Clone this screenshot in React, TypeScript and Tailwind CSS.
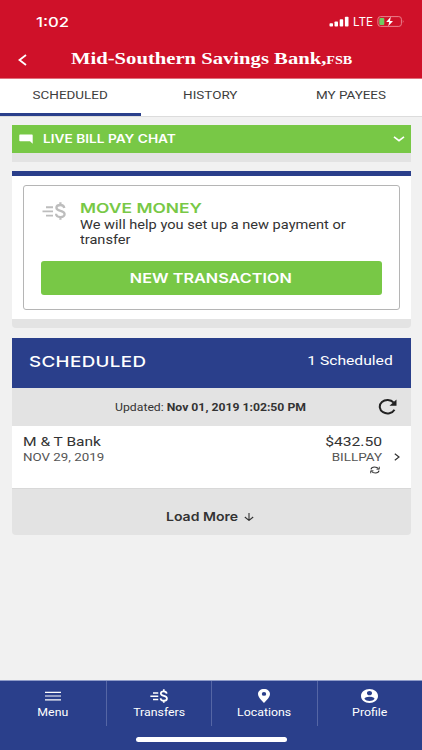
import type { ReactNode } from 'react';
import { clsx } from 'clsx';

const heading = "font-['Inter','Liberation_Sans',sans-serif]";

// Wide label: the app's type is set extended, so every run of text is stretched sideways
function Label({ className, children }: { className?: string; children: ReactNode }) {
  return <span className={clsx('block w-max whitespace-nowrap', className)}>{children}</span>;
}

function MoneyIcon({ className }: { className?: string }) {
  return (
    <svg viewBox="0 0 24 18" preserveAspectRatio="none" fill="none" stroke="currentColor" className={className}>
      <path d="M4 5.2h7M0.5 9.4h10.500M4 13.6h7" strokeWidth="1.9" />
      <path d="M22.3 6C22 4 20.6 3 18.3 3c-2.300 0-3.900 1-3.900 2.800 0 4.200 8.200 2 8.200 6.300 0 1.900-1.700 3-4.200 3-2.500 0-4.200-1.200-4.300-3.300M18.400 0.300v2.700M18.400 15v2.700" strokeWidth="2.300" />
    </svg>
  );
}

function StatusBar() {
  return (
    <div className="flex h-[43px] items-center justify-between pr-[17px] pl-9">
      <Label className="origin-left scale-x-[1.24] font-['Inter',sans-serif] text-[13.5px] leading-4 font-medium">1:02</Label>
      <div className="flex h-[11px] items-center">
        <svg viewBox="0 0 20 11" className="h-[11px] w-5" fill="currentColor">
          <rect x="0.500" y="7.200" width="3.500" height="3.300" rx="0.800" />
          <rect x="5.500" y="5.400" width="3.500" height="5.100" rx="0.800" />
          <rect x="10.700" y="3.300" width="3.500" height="7.200" rx="0.800" />
          <rect x="15.900" y="0.800" width="3.600" height="9.700" rx="0.800" />
        </svg>
        <div className="ml-1 w-6">
          <Label className="origin-left scale-x-[1.02] font-['Inter',sans-serif] text-[11.500px] leading-3">LTE</Label>
        </div>
        <svg viewBox="0 0 28 11" className="h-[11px] w-7" fill="none">
          <rect x="0.900" y="0.600" width="23.500" height="9.800" rx="2.600" stroke="#e9808c" />
          <path d="M25.800 3.700q1.700 1.800 0 3.600z" fill="#e9808c" />
          <rect x="2.300" y="2" width="5" height="7" rx="1" fill="#6fcb62" />
          <path d="M13.800 0.800L9.200 6h3l-1 4.300L16 4.900h-3z" fill="#fff" />
        </svg>
      </div>
    </div>
  );
}

function Header() {
  return (
    <header className="h-[79px] border-b border-[#e0707c] bg-[#cf1129] text-white">
      <StatusBar />
      <div className="flex h-[34px] items-center pl-[18px]">
        <svg viewBox="0 0 9 12" className="h-3 w-[9px]" fill="none" stroke="currentColor" strokeWidth="1.800">
          <path d="M8 1L1.500 6L8 11" />
        </svg>
        <h1 className="mb-[2px] ml-11 flex w-[281px] font-['Liberation_Serif',serif] font-bold">
          <Label className="origin-left scale-x-[1.18] text-[17.500px] leading-5">
            Mid-Southern Savings Bank,<span className="text-[12px]">FSB</span>
          </Label>
        </h1>
      </div>
    </header>
  );
}

function Tabs() {
  return (
    <nav className="grid h-[38px] grid-cols-3 border-b border-[#dcdcdc] bg-white text-[11.500px] leading-4 text-[#3c3c3c]">
      {['SCHEDULED', 'HISTORY', 'MY PAYEES'].map((tab, i) => (
        <div key={tab} className={clsx('flex h-[37px] justify-center pt-2', i === 0 ? 'border-b-[3px] border-[#2a3f8b]' : 'pr-px')}>
          <Label className="scale-x-[1.17]">{tab}</Label>
        </div>
      ))}
    </nav>
  );
}

function ChatBar() {
  return (
    <section className="border-b-[9px] border-[#e3e3e3]">
      <div className="flex h-7 items-center bg-[#78c846] pr-[6px] pl-[7px] text-white">
        <svg viewBox="0 0 14 10" className="h-[10px] w-[14px]" fill="currentColor">
          <path d="M1 0.500h12q.7 0 .7.7V9.700L11 7.300H1q-.7 0-.7-.7V1.200q0-.7.7-.7z" />
        </svg>
        <Label className={clsx(heading, 'ml-[10px] origin-left scale-x-[1.19] text-[11.500px] leading-4 font-semibold')}>LIVE BILL PAY CHAT</Label>
        <svg viewBox="0 0 12 6" className="ml-auto h-[6px] w-3" fill="none" stroke="currentColor" strokeWidth="1.700">
          <path d="M1 0.900L6 4.600L11 0.900" />
        </svg>
      </div>
    </section>
  );
}

function MoveMoney() {
  return (
    <section className="mt-[9px] overflow-hidden rounded-b-[4px] border-t-[5px] border-b-[9px] border-t-[#2a3f8b] border-b-[#e3e3e3] bg-white px-[11px] pt-[9px] pb-[9px]">
      <div className="h-[125px] rounded-[3px] border border-[#b5b5b5] px-[17px]">
        <div className="flex h-[75px] pt-[15px]">
          <MoneyIcon className="mt-px ml-px h-[18px] w-6 text-[#bdbdbd]" />
          <div className="ml-[14px] text-[#333]">
            <h2>
              <Label className={clsx(heading, 'origin-left scale-x-[1.29] text-[13.500px] leading-[14px] font-semibold text-[#78c846]')}>MOVE MONEY</Label>
            </h2>
            <Label className="mt-[2px] origin-left scale-x-[1.122] text-[13px] leading-[15px]">
              We will help you set up a new payment or
              <br />
              transfer
            </Label>
          </div>
        </div>
        <button className="flex h-[34px] w-full items-center justify-center rounded-[3px] bg-[#78c846] text-white">
          <Label className={clsx(heading, 'mr-px scale-x-[1.25] text-[13px] leading-4 font-semibold')}>NEW TRANSACTION</Label>
        </button>
      </div>
    </section>
  );
}

function Scheduled() {
  return (
    <section className="mt-[10px] overflow-hidden rounded-b-[4px] bg-[#e3e3e3] text-[#333]">
      <div className="flex h-[50px] justify-between bg-[#2a3f8b] pr-[18px] pl-[17px] text-white">
        <Label className={clsx(heading, 'mt-4 origin-left scale-x-[1.25] text-[15px] leading-4 font-medium tracking-[0.3px]')}>SCHEDULED</Label>
        <Label className="mt-[14px] origin-right scale-x-[1.16] text-[13.500px] leading-4">1 Scheduled</Label>
      </div>
      <div className="flex h-[38px] items-center justify-end pr-[14px]">
        <Label className="mr-[72px] origin-right scale-x-[1.11] pt-px text-[11px] leading-4">
          Updated: <b className="font-bold">Nov 01, 2019 1:02:50 PM</b>
        </Label>
        <svg viewBox="0 0 19 16" className="h-4 w-[19px]" fill="none" stroke="#222">
          <path d="M15.700 3.600A7.800 6.700 0 1 0 16.500 10.800" strokeWidth="2" />
          <path d="M18.500 0.500V6.700H11.500z" fill="#222" stroke="none" />
        </svg>
      </div>
      <div className="flex h-[63px] border-b border-[#d8d8d8] bg-white pt-2 pr-[11px] pl-[11px]">
        <div>
          <Label className="origin-left scale-x-[1.15] text-[13.500px] leading-[15px]">M &amp; T Bank</Label>
          <Label className="origin-left scale-x-[1.16] text-[11.500px] leading-4 text-[#555]">NOV 29, 2019</Label>
        </div>
        <div className="ml-auto flex flex-col items-end">
          <Label className="origin-right scale-x-[1.16] text-[13.500px] leading-[15px]">$432.50</Label>
          <Label className="origin-right scale-x-[1.17] text-[11.500px] leading-4 text-[#555]">BILLPAY</Label>
          <svg viewBox="0 0 10 8" className="mt-px mr-[2px] h-2 w-[10px]" fill="none" stroke="#333">
            <path d="M1 3.300C1.300 1.700 2.500 1 4.500 1C6.400 1 7.700 1.600 8.500 2.800M9 4.700C8.700 6.300 7.500 7 5.500 7C3.600 7 2.300 6.400 1.500 5.200" strokeWidth="1.100" />
            <path d="M9.300 0.700V3.200H6.500M0.700 7.300V4.800H3.500" strokeWidth="0.900" />
          </svg>
        </div>
        <svg viewBox="0 0 6 8" className="mt-[19px] ml-3 h-2 w-[6px]" fill="none" stroke="#333" strokeWidth="1.200">
          <path d="M0.800 0.700L5 4L0.800 7.300" />
        </svg>
      </div>
      <div className="flex h-[46px] items-center pt-[10px] pl-[154px]">
        <div className="w-[78px]">
          <Label className={clsx(heading, 'origin-left scale-x-[1.17] text-[12px] leading-4 font-semibold')}>Load More</Label>
        </div>
        <svg viewBox="0 0 10 8" className="h-2 w-[10px]" fill="none" stroke="#333" strokeWidth="1.100">
          <path d="M5 0V7.300M0.800 4L5 7.400L9.200 4" />
        </svg>
      </div>
    </section>
  );
}

const navItems = [
  {
    label: 'Menu',
    icon: (
      <svg viewBox="0 0 16 14" className="h-[14px] w-4" fill="none" stroke="currentColor" strokeWidth="1.200">
        <path d="M0 3.300h16M0 7h16M0 10.800h16" />
      </svg>
    ),
  },
  { label: 'Transfers', icon: <MoneyIcon className="h-[14px] w-[18px]" /> },
  {
    label: 'Locations',
    icon: (
      <svg viewBox="0 0 12 14" className="h-[14px] w-3" fill="currentColor" fillRule="evenodd">
        <path d="M6 0C2.500 0 0 2.100 0 5c0 3.600 6 9 6 9s6-5.400 6-9c0-2.900-2.500-5-6-5zM6 6.800a2.200 1.900 0 1 1 0-3.800a2.200 1.900 0 1 1 0 3.800z" />
      </svg>
    ),
  },
  {
    label: 'Profile',
    icon: (
      <svg viewBox="2 2 20 20" preserveAspectRatio="none" className="h-[14px] w-[17px]" fill="currentColor">
        <path d="M12 2C6.480 2 2 6.480 2 12s4.480 10 10 10 10-4.480 10-10S17.520 2 12 2zm0 3c1.660 0 3 1.340 3 3s-1.340 3-3 3-3-1.340-3-3 1.340-3 3-3zm0 14.200c-2.500 0-4.710-1.280-6-3.220.03-1.990 4-3.080 6-3.080 1.990 0 5.970 1.090 6 3.080-1.290 1.940-3.500 3.220-6 3.220z" />
      </svg>
    ),
  },
];

function BottomNav() {
  return (
    <footer className="mt-auto h-[70px] border-t border-[#8f9cc9] bg-[#2a3f8b] text-white">
      <div className="grid h-[45px] grid-cols-4">
        {navItems.map((item, i) => (
          <div key={item.label} className={clsx('flex flex-col items-center border-l pt-2', i ? 'border-[#5566a5]' : 'border-transparent')}>
            {item.icon}
            <Label className="mt-[2px] scale-x-[1.12] text-[11px] leading-4">{item.label}</Label>
          </div>
        ))}
      </div>
      <div className="mx-auto mt-[11px] h-[5px] w-[151px] rounded-full bg-white" />
    </footer>
  );
}

export default function App() {
  return (
    <div className="flex h-[750px] w-[422px] flex-col overflow-hidden bg-[#f1f1f1] font-['Roboto','Liberation_Sans',sans-serif]">
      <Header />
      <Tabs />
      <main className="pt-2 pr-[11px] pl-3">
        <ChatBar />
        <MoveMoney />
        <Scheduled />
      </main>
      <BottomNav />
    </div>
  );
}
